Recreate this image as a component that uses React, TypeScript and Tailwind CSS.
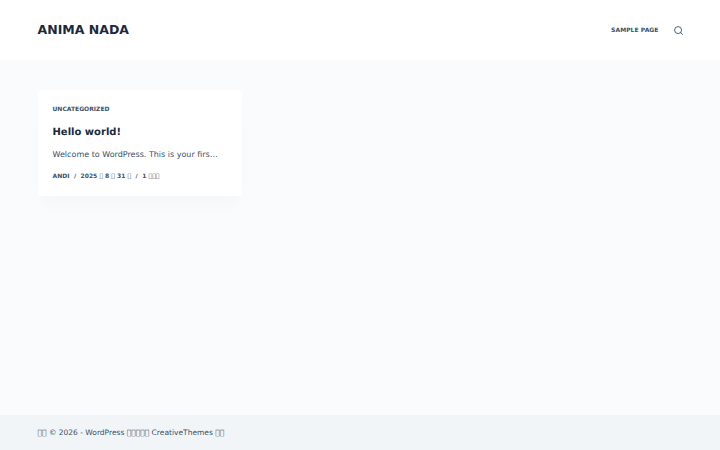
export default function App() {
  const font = { fontFamily: '"DejaVu Sans", sans-serif' };
  return (
    <div style={font} className="flex h-[450px] w-[720px] flex-col overflow-hidden bg-[#fafbfc] font-['DejaVu_Sans',sans-serif] antialiased opacity-[0.999] [text-rendering:geometricPrecision]">
      <header className="flex h-[60px] shrink-0 items-center justify-between bg-white px-[37.5px]">
        <a className="text-[12.5px] font-bold leading-none text-[#192a3d]">ANIMA NADA</a>
        <nav className="flex items-center gap-[15px]">
          <a className="mt-[1px] text-[6px] font-bold leading-none tracking-[0.05px] text-[#3a4f66]">SAMPLE PAGE</a>
          <svg width="9" height="9" viewBox="0 0 15 15" fill="none" stroke="#3a4f66" strokeWidth="1.5" className="mt-[1px]">
            <circle cx="6.8" cy="6.8" r="5.8" />
            <path d="M11 11l3.2 3.2" strokeLinecap="round" />
          </svg>
        </nav>
      </header>
      <main className="flex-1 px-[37.5px] pt-[30px]">
        <article className="flex h-[106px] w-[204.5px] flex-col rounded-[3px] bg-white px-[15px] pt-[15px] shadow-[0_12px_18px_-6px_rgba(34,56,101,0.03)]">
          <div className="mt-[1px] text-[6px] font-bold leading-[8px] text-[#3a4f66]">UNCATEGORIZED</div>
          <h2 className="mt-[11px] text-[10px] font-bold leading-[16px] text-[#192a3d]">Hello world!</h2>
          <p className="mt-[7px] text-[8px] leading-[14px] text-[#3a4f66]">Welcome to WordPress. This is your firs…</p>
          <div className="mt-[10.5px] flex items-center text-[6px] font-bold leading-[8px] text-[#3a4f66]">
            <span>ANDI</span>
            <span className="mx-[4.5px]">/</span>
            <span>2025 &#xE000; 8 &#xE000; 31 &#xE000;</span>
            <span className="mx-[4.5px]">/</span>
            <span>1 &#xE000;&#xE000;&#xE000;</span>
          </div>
        </article>
      </main>
      <footer className="flex h-[35px] shrink-0 items-center bg-[#f2f5f7] px-[37.5px] text-[7.5px] text-[#3a4f66]">
        <span>&#xE000;&#xE000; © 2026 - WordPress &#xE000;&#xE000;&#xE000;&#xE000;&#xE000; CreativeThemes &#xE000;&#xE000;</span>
      </footer>
    </div>
  );
}
